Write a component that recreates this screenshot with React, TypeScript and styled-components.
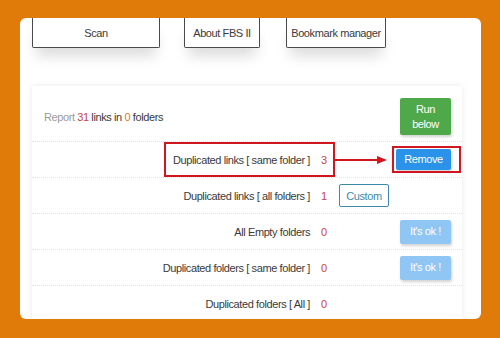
import React from "react";
import styled, { createGlobalStyle } from "styled-components";

const colors = {
    orange: "#e07a08",
    text: "#3a3a3a",
    count: "#c8453f",
    annot: "#d0161e",
    green: "#4fa84a",
    blue: "#2a92e8",
    lightBlue: "#8fc6f3",
    teal: "#3d8aa8",
}

const GlobalStyle = createGlobalStyle`
    html, body {
        margin:0;
        padding:0;
        background:${colors.orange};
        font-family:"Liberation Sans", Arial, sans-serif;
    }
`

const Page = styled.div`
    width:500px;
    height:338px;
    box-sizing:border-box;
    padding:18px 19px 19px 20px;
    letter-spacing:-0.4px;
`
const Card = styled.div`
    height:100%;
    background:#fff;
    border-radius:6px;
    overflow:hidden;
    padding:0 19px 0 12px;
    box-sizing:border-box;
`
const Nav = styled.div`
    display:flex;
    align-items:flex-start;
    gap:24px;
`
const Tab = styled.div<{ w: number; ml?: number }>`
    width:${p => p.w}px;
    margin-left:${p => p.ml || 0}px;
    height:30px;
    box-sizing:border-box;
    border:1px solid #4a4a4a;
    border-top:none;
    border-radius:0 0 2px 2px;
    display:flex;
    align-items:center;
    justify-content:center;
    font-size:11px;
    color:${colors.text};
    background:#fff;
    box-shadow:0 12px 14px -4px rgba(0,0,0,0.14);
`
const Panel = styled.div`
    margin-top:38px;
    background:#fff;
    box-shadow:0 0 6px rgba(0,0,0,0.09);
`
const HeadRow = styled.div`
    height:55px;
    box-sizing:border-box;
    padding:6px 11px 0 12px;
    display:flex;
    align-items:center;
    justify-content:space-between;
    font-size:11px;
    color:${colors.text};
`
const Muted = styled.span`
    color:#9a9a9a;
`
const Num = styled.span<{ tone?: string }>`
    color:${p => p.tone || colors.count};
`
const Row = styled.div`
    position:relative;
    height:36px;
    display:grid;
    grid-template-columns:1fr 18px 114px;
    align-items:center;
    padding:0 11px 0 12px;
    font-size:11px;
    color:${colors.text};
    border-top:1px dotted #e2e2e2;
    box-sizing:border-box;
`
const Label = styled.div`
    text-align:right;
    padding-right:9px;
`
const Count = styled.div`
    color:${colors.count};
    padding-left:2px;
`
const Action = styled.div<{ align?: string }>`
    display:flex;
    justify-content:${p => p.align || "flex-end"};
    padding-left:2px;
`
const Button = styled.div<{ bg: string; w: number; h: number }>`
    width:${p => p.w}px;
    height:${p => p.h}px;
    background:${p => p.bg};
    color:#fff;
    font-size:11px;
    border-radius:2px;
    display:flex;
    align-items:center;
    justify-content:center;
    text-align:center;
    line-height:15px;
    box-shadow:1px 2px 3px rgba(0,0,0,0.18);
`
const OutlineButton = styled.div`
    width:50px;
    height:23px;
    box-sizing:border-box;
    border:1px solid ${colors.teal};
    border-radius:2px;
    color:${colors.teal};
    font-size:11px;
    display:flex;
    align-items:center;
    justify-content:center;
`
const AnnotBox = styled.div<{ l: number; t: number; w: number; h: number }>`
    position:absolute;
    left:${p => p.l}px;
    top:${p => p.t}px;
    width:${p => p.w}px;
    height:${p => p.h}px;
    border:2px solid ${colors.annot};
    box-sizing:border-box;
    pointer-events:none;
`
const Arrow = styled.svg`
    position:absolute;
    left:303px;
    top:13px;
`

function App() {
    return (
        <Page>
            <GlobalStyle />
            <Card>
                <Nav>
                    <Tab w={128}>Scan</Tab>
                    <Tab w={76}>About FBS II</Tab>
                    <Tab w={100} ml={2}>Bookmark manager</Tab>
                </Nav>
                <Panel>
                    <HeadRow>
                        <span>
                            <Muted>Report </Muted><Num>31</Num> links in <Num tone="#e07a2a">0</Num> folders
                        </span>
                        <Button bg={colors.green} w={51} h={37}>Run<br />below</Button>
                    </HeadRow>
                    <Row>
                        <Label>Duplicated links [ same folder ]</Label>
                        <Count>3</Count>
                        <Action>
                            <Button bg={colors.blue} w={55} h={21}>Remove</Button>
                        </Action>
                        <AnnotBox l={132} t={0} w={171} h={35} />
                        <Arrow width="52" height="10" viewBox="0 0 52 10">
                            <line x1="0" y1="5" x2="44" y2="5" stroke={colors.annot} strokeWidth="2" />
                            <polygon points="42,1 52,5 42,9" fill={colors.annot} />
                        </Arrow>
                        <AnnotBox l={360} t={4} w={69} h={27} />
                    </Row>
                    <Row>
                        <Label>Duplicated links [ all folders ]</Label>
                        <Count>1</Count>
                        <Action align="flex-start">
                            <OutlineButton>Custom</OutlineButton>
                        </Action>
                    </Row>
                    <Row>
                        <Label>All Empty folders</Label>
                        <Count>0</Count>
                        <Action>
                            <Button bg={colors.lightBlue} w={51} h={24}>It's ok !</Button>
                        </Action>
                    </Row>
                    <Row>
                        <Label>Duplicated folders [ same folder ]</Label>
                        <Count>0</Count>
                        <Action>
                            <Button bg={colors.lightBlue} w={51} h={24}>It's ok !</Button>
                        </Action>
                    </Row>
                    <Row>
                        <Label>Duplicated folders [ All ]</Label>
                        <Count>0</Count>
                        <Action />
                    </Row>
                </Panel>
            </Card>
        </Page>
    )
}

export default App
